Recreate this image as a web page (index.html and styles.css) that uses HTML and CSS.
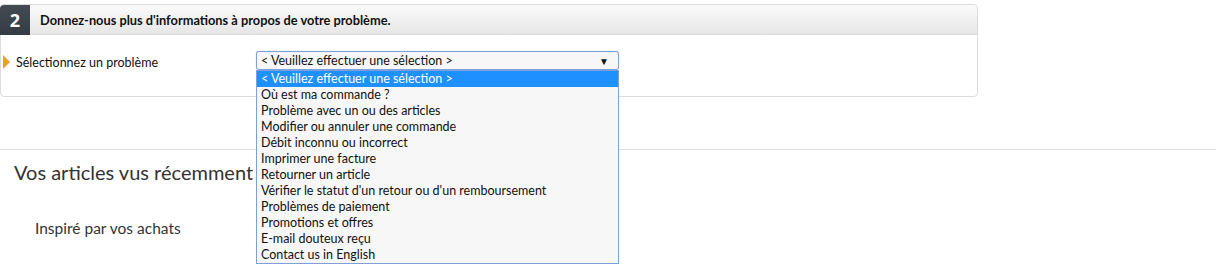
FILE: index.html
```html
<!DOCTYPE html>
<html lang="fr">
<head>
<meta charset="utf-8">
<link rel="stylesheet" href="styles.css">
</head>
<body>
<div class="card">
  <div class="card-head">
    <div class="step">2</div>
    <div class="head-title">Donnez-nous plus d'informations à propos de votre problème.</div>
  </div>
  <div class="card-body">
    <div class="field">
      <span class="marker"></span>
      <span class="field-label">Sélectionnez un problème</span>
    </div>
    <div class="select-wrap">
      <div class="select">
        <span>&lt; Veuillez effectuer une sélection &gt;</span>
        <span class="caret">▼</span>
      </div>
      <ul class="options">
        <li class="active">&lt; Veuillez effectuer une sélection &gt;</li>
        <li>Où est ma commande ?</li>
        <li>Problème avec un ou des articles</li>
        <li>Modifier ou annuler une commande</li>
        <li>Débit inconnu ou incorrect</li>
        <li>Imprimer une facture</li>
        <li>Retourner un article</li>
        <li>Vérifier le statut d'un retour ou d'un remboursement</li>
        <li>Problèmes de paiement</li>
        <li>Promotions et offres</li>
        <li>E-mail douteux reçu</li>
        <li>Contact us in English</li>
      </ul>
    </div>
  </div>
</div>
<section class="recs">
  <h2 class="recs-title">Vos articles vus récemment</h2>
  <p class="recs-sub">Inspiré par vos achats</p>
</section>
</body>
</html>
```

FILE: styles.css
```css
html, body {
  margin: 0;
  padding: 0;
  background: #fff;
}
body {
  font-family: Lato, "Open Sans", "Liberation Sans", Arial, sans-serif;
  color: #111;
  width: 1216px;
  height: 268px;
  overflow: hidden;
}
.card {
  margin-top: 4px;
  width: 976px;
  border: 1px solid #dcdcdc;
  border-radius: 4px;
  box-sizing: content-box;
}
.card-head {
  display: flex;
  align-items: center;
  height: 29px;
  background: linear-gradient(#fbfbfb, #e6e6e6);
  border-bottom: 1px solid #dcdcdc;
  border-radius: 4px 4px 0 0;
}
.step {
  width: 30px;
  height: 30px;
  margin: -1px 0 -1px -1px;
  background: linear-gradient(#434a53, #353b42);
  color: #fff;
  font-family: "Open Sans", Lato, sans-serif;
  font-weight: bold;
  font-size: 18px;
  line-height: 30px;
  text-align: center;
  border-radius: 4px 0 0 0;
}
.head-title {
  margin-left: 10px;
  font-size: 12.8px;
  font-weight: bold;
  color: #111;
}
.card-body {
  height: 61px;
  display: flex;
  align-items: flex-start;
  padding-top: 16px;
  box-sizing: border-box;
}
.field {
  width: 255px;
  display: flex;
  align-items: center;
  height: 18px;
  padding-top: 2px;
}
.marker {
  width: 0;
  height: 0;
  margin-left: 2px;
  border-top: 7px solid transparent;
  border-bottom: 7px solid transparent;
  border-left: 7px solid #f0a020;
}
.field-label {
  margin-left: 6px;
  font-size: 12.5px;
  color: #111;
}
.select-wrap {
  position: relative;
  width: 363px;
}
.select {
  display: flex;
  justify-content: space-between;
  align-items: center;
  height: 19px;
  box-sizing: border-box;
  border: 1px solid #7da0d8;
  border-radius: 3px;
  background: #f7f7f7;
  padding: 0 9px 0 4px;
  font-size: 12.5px;
  line-height: 16px;
  box-shadow: 0 0 1px #9ab6e6;
}
.caret {
  font-size: 10px;
  color: #111;
}
.options {
  position: absolute;
  top: 19px;
  left: 0;
  width: 363px;
  box-sizing: border-box;
  margin: 0;
  padding: 0;
  list-style: none;
  background: #f7f7f7;
  border: 1px solid #7da0d8;
  font-size: 12.5px;
  z-index: 2;
}
.options li {
  height: 16px;
  line-height: 16px;
  padding-left: 4px;
  white-space: nowrap;
}
.options li.active {
  background: #1e90ff;
  color: #fff;
}
.recs {
  margin-top: 52px;
  border-top: 1px solid #dddddd;
}
.recs-title {
  margin: 9px 0 0 14px;
  font-size: 20px;
  font-weight: normal;
  color: #333;
  white-space: nowrap;
  line-height: 26px;
}
.recs-sub {
  margin: 33px 0 0 35px;
  font-size: 15.5px;
  color: #333;
  line-height: 20px;
}
```
